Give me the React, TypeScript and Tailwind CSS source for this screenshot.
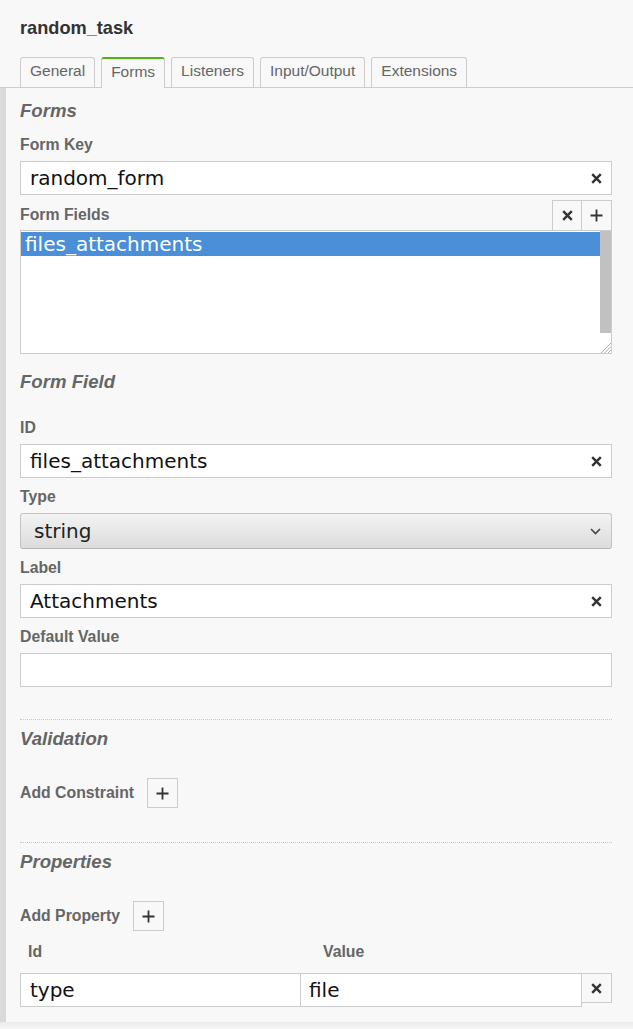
/**
 * Properties panel - Forms tab of a user task
 */

import React from 'react';

const ClearIcon = () => (
  <svg width="11" height="11" viewBox="0 0 11 11" aria-hidden>
    <path d="M1.2 1.2l8.6 8.6M9.8 1.2l-8.6 8.6" stroke="#333" strokeWidth="2.4" />
  </svg>
);

const PlusIcon = () => (
  <svg width="13" height="13" viewBox="0 0 13 13" aria-hidden>
    <path d="M6.5 0.5v12M0.5 6.5h12" stroke="#333" strokeWidth="1.8" />
  </svg>
);

const Chevron = () => (
  <svg width="11" height="7" viewBox="0 0 11 7" aria-hidden>
    <path d="M1 1l4.5 4.5L10 1" fill="none" stroke="#444" strokeWidth="1.6" />
  </svg>
);

function TextField({ value, clear = true }: { value: string; clear?: boolean }) {
  return (
    <div className="flex h-[34px] items-center border border-[#ccc] bg-white">
      <input
        readOnly
        defaultValue={value}
        className="h-full min-w-0 flex-1 bg-transparent pl-[9px] font-['DejaVu_Sans',sans-serif] text-[20px] text-[#111] outline-none"
      />
      {clear && (
        <span className="flex h-full w-[30px] items-center justify-center">
          <ClearIcon />
        </span>
      )}
    </div>
  );
}

function Label({ children, className = '' }: { children: React.ReactNode; className?: string }) {
  return <div className={`text-[15.8px] font-bold leading-[18px] text-[#666] ${className}`}>{children}</div>;
}

function GroupTitle({ children, className = '' }: { children: React.ReactNode; className?: string }) {
  return <div className={`text-[18.6px] font-bold italic leading-[22px] text-[#666] ${className}`}>{children}</div>;
}

function AddButton() {
  return (
    <span className="flex h-[30px] w-[31px] items-center justify-center border border-[#ccc]">
      <PlusIcon />
    </span>
  );
}

const tabs = ['General', 'Forms', 'Listeners', 'Input/Output', 'Extensions'];

export default function App() {
  return (
    <div className="flex h-[1029px] flex-col overflow-hidden bg-[#f8f8f8] font-['Liberation_Sans',Arial,sans-serif]">
      {/* Header */}
      <div className="pl-[20px] pt-[17px] text-[18.2px] font-bold leading-[22px] text-[#333]">random_task</div>

      {/* Tabs */}
      <div className="mt-[18px] flex items-end gap-[6px] border-b border-[#ccc] px-[20px]">
        {tabs.map(tab =>
          tab === 'Forms' ? (
            <div
              key={tab}
              className="relative -mb-px h-[31px] rounded-t-[3px] border border-b-0 border-[#ccc] border-t-2 border-t-[#52b415] bg-[#f8f8f8] px-[9px] text-[15.5px] leading-[25px] text-[#666]"
            >
              {tab}
            </div>
          ) : (
            <div
              key={tab}
              className="h-[30px] rounded-t-[3px] border border-b-0 border-[#ccc] px-[9px] text-[15.5px] leading-[26px] text-[#666]"
            >
              {tab}
            </div>
          )
        )}
      </div>

      {/* Body */}
      <div className="flex flex-1">
        <div className="w-[6px] bg-[#dadada]" />
        <div className="flex-1 pl-[14px] pr-[21px]">
          <GroupTitle className="mt-[12px]">Forms</GroupTitle>

          <Label className="mt-[14px]">Form Key</Label>
          <div className="mt-[7px]">
            <TextField value="random_form" />
          </div>

          <div className="mt-[5px] flex h-[30px] items-center justify-between">
            <Label>Form Fields</Label>
            <div className="flex self-end">
              <span className="flex h-[30px] w-[30px] items-center justify-center border border-b-0 border-[#ccc]">
                <ClearIcon />
              </span>
              <span className="flex h-[30px] w-[30px] items-center justify-center border border-b-0 border-l-0 border-[#ccc]">
                <PlusIcon />
              </span>
            </div>
          </div>
          <div className="flex h-[124px] border border-[#ccc] bg-white">
            <div className="flex-1 pt-[1px]">
              <div className="bg-[#4a8fd8] pl-[4px] font-['DejaVu_Sans',sans-serif] text-[20px] leading-[24px] text-white">
                files_attachments
              </div>
            </div>
            <div className="flex w-[11px] flex-col">
              <div className="h-[102px] bg-[#c1c1c1]" />
              <div className="flex flex-1 items-end justify-end">
                <svg width="11" height="11" viewBox="0 0 11 11" aria-hidden>
                  <path d="M11 1L1 11M11 4.5L4.5 11M11 8L8 11" stroke="#aaa" strokeWidth="1" />
                </svg>
              </div>
            </div>
          </div>

          <GroupTitle className="mt-[17px]">Form Field</GroupTitle>

          <Label className="mt-[26px]">ID</Label>
          <div className="mt-[7px]">
            <TextField value="files_attachments" />
          </div>

          <Label className="mt-[10px]">Type</Label>
          <div className="mt-[7px] flex h-[36px] items-center justify-between rounded-[3px] border border-[#c4c4c4] border-b-[#b5b5b5] bg-linear-to-b from-[#f3f3f3] to-[#dcdcdc] pl-[13px] pr-[10px]">
            <span className="font-['DejaVu_Sans',sans-serif] text-[20px] text-[#222]">string</span>
            <Chevron />
          </div>

          <Label className="mt-[10px]">Label</Label>
          <div className="mt-[7px]">
            <TextField value="Attachments" />
          </div>

          <Label className="mt-[10px]">Default Value</Label>
          <div className="mt-[7px]">
            <TextField value="" clear={false} />
          </div>

          <div className="mt-[32px] border-t border-dotted border-[#c8c8c8]" />
          <GroupTitle className="mt-[8px]">Validation</GroupTitle>

          <div className="mt-[28px] flex items-center gap-[13px]">
            <Label>Add Constraint</Label>
            <AddButton />
          </div>

          <div className="mt-[34px] border-t border-dotted border-[#c8c8c8]" />
          <GroupTitle className="mt-[8px]">Properties</GroupTitle>

          <div className="mt-[28px] flex items-center gap-[13px]">
            <Label>Add Property</Label>
            <AddButton />
          </div>

          <div className="mt-[12px] flex">
            <Label className="w-[280px] pl-[8px]">Id</Label>
            <Label className="pl-[23px]">Value</Label>
          </div>
          <div className="mt-[12px] flex items-start">
            <div className="h-[34px] w-[281px] border border-[#ccc] bg-white pl-[9px] font-['DejaVu_Sans',sans-serif] text-[20px] leading-[32px] text-[#111]">
              type
            </div>
            <div className="-ml-px h-[34px] flex-1 border border-[#ccc] bg-white pl-[8px] font-['DejaVu_Sans',sans-serif] text-[20px] leading-[32px] text-[#111]">
              file
            </div>
            <span className="-ml-px flex h-[30px] w-[31px] items-center justify-center border border-[#ccc]">
              <ClearIcon />
            </span>
          </div>
        </div>
      </div>
      <div className="h-[7px] bg-linear-to-b from-[#ebebeb] to-[#f6f6f6]" />
    </div>
  );
}
